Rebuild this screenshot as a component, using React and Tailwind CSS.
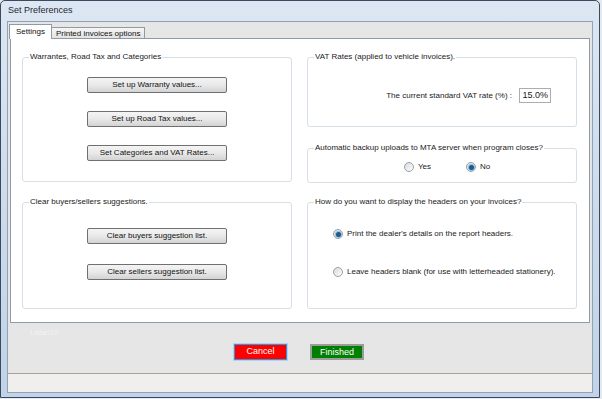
import { useState } from "react";

function GroupBox({ title, className, children }) {
  return (
    <div className={`relative rounded-[3px] border border-[#d5dfe5] ${className}`}>
      <span className="absolute -top-[6px] left-[6px] bg-white px-px text-[8px] leading-[10px] text-[#1a1a1a]">{title}</span>
      {children}
    </div>
  );
}

function WinButton({ children, className = "" }) {
  return (
    <button className={`h-[16px] rounded-[2px] border border-[#707070] bg-gradient-to-b from-[#f4f4f4] via-[#e9e9e9] to-[#d3d3d3] text-[8px] leading-[10px] text-[#111] ${className}`}>
      {children}
    </button>
  );
}

function Radio({ checked, label, onClick }) {
  return (
    <label onClick={onClick} className="flex items-center gap-[4px] text-[8px] leading-[10px] text-[#1a1a1a] cursor-default">
      <span className="flex h-[10px] w-[10px] items-center justify-center rounded-full border border-[#9aa0a8] bg-gradient-to-br from-[#d6d9de] to-[#ffffff]">
        {checked && <span className="h-[5px] w-[5px] rounded-full bg-[#1e5a8c] shadow-[0_0_0_1px_#8dbde2]" />}
      </span>
      {label}
    </label>
  );
}

export default function App() {
  const [backup, setBackup] = useState("no");
  const [header, setHeader] = useState("print");

  return (
    <div className="h-[399px] w-[602px] bg-[#e4e9ef] font-['Liberation_Sans',Arial,sans-serif]">
      <div className="flex h-[398px] w-[600px] flex-col rounded-t-[5px] border border-[#3a4a60] bg-gradient-to-b from-[#dde7f3] via-[#cddbeb] to-[#c2d3e7] px-[6px] pb-[4px]">
        {/* title bar */}
        <div className="flex h-[20px] items-center pl-[1px] text-[9px] text-[#1e2836]">Set Preferences</div>

        {/* client area */}
        <div className="flex flex-1 flex-col border border-[#8ea2b8] bg-[#e6e6e6]">
          {/* tabs */}
          <div className="ml-[1px] flex h-[16px] items-end pt-[2px]">
            <div className="relative z-10 -mb-px flex h-[15px] items-center border border-b-0 border-[#8e9aa8] bg-white px-[6px] text-[8px] text-[#111]">
              Settings
            </div>
            <div className="-mb-px flex h-[12px] items-center border border-b-0 border-l-0 border-[#8e9aa8] bg-gradient-to-b from-[#f6f6f6] to-[#e1e1e1] px-[4px] text-[8px] text-[#111]">
              Printed invoices options
            </div>
          </div>

          {/* tab panel */}
          <div className="ml-[2px] mr-[2px] h-[285px] border border-[#8e9aa8] bg-white px-[11px] pt-[18px]">
            <div className="flex gap-[15px]">
              <div className="flex w-[270px] flex-col">
                <GroupBox title="Warrantes, Road Tax and Categories" className="h-[125px]">
                  <div className="flex flex-col items-center gap-[18px] pt-[19px]">
                    <WinButton className="w-[140px]">Set up Warranty values...</WinButton>
                    <WinButton className="w-[140px]">Set up Road Tax values...</WinButton>
                    <WinButton className="w-[140px]">Set Categories and VAT Rates...</WinButton>
                  </div>
                </GroupBox>
                <GroupBox title="Clear buyers/sellers suggestions." className="mt-[20px] h-[107px]">
                  <div className="flex flex-col items-center gap-[20px] pt-[25px]">
                    <WinButton className="w-[140px]">Clear buyers suggestion list.</WinButton>
                    <WinButton className="w-[140px]">Clear sellers suggestion list.</WinButton>
                  </div>
                </GroupBox>
              </div>

              <div className="flex w-[270px] flex-col">
                <GroupBox title="VAT Rates (applied to vehicle invoices)." className="h-[70px]">
                  <div className="flex items-center justify-end gap-[7px] pr-[25px] pt-[30px] text-[8px] text-[#1a1a1a]">
                    <span>The current standard VAT rate (%) :</span>
                    <div className="flex h-[15px] w-[32px] items-center justify-end border border-[#abadb3] pr-[2px] text-[9px]">15.0%</div>
                  </div>
                </GroupBox>
                <GroupBox title="Automatic backup uploads to MTA server when program closes?" className="mt-[21px] h-[35px]">
                  <div className="flex items-center gap-[35px] pl-[96px] pt-[13px]">
                    <Radio label="Yes" checked={backup === "yes"} onClick={() => setBackup("yes")} />
                    <Radio label="No" checked={backup === "no"} onClick={() => setBackup("no")} />
                  </div>
                </GroupBox>
                <GroupBox title="How do you want to display the headers on your invoices?" className="mt-[19px] h-[107px]">
                  <div className="flex flex-col gap-[28px] pl-[25px] pt-[26px]">
                    <Radio label="Print the dealer's details on the report headers." checked={header === "print"} onClick={() => setHeader("print")} />
                    <Radio label="Leave headers blank (for use with letterheaded stationery)." checked={header === "blank"} onClick={() => setHeader("blank")} />
                  </div>
                </GroupBox>
              </div>
            </div>
          </div>

          {/* footer */}
          <div className="flex h-[50px] flex-col">
            <div className="pl-[22px] pt-[5px] text-[8px] leading-[10px] text-[#f2f2f2]">Label10</div>
            <div className="mt-[6px] flex justify-center gap-[23px] pr-[2px]">
              <button className="h-[16px] w-[53px] border border-[#3c8fd0] bg-[#ff0000] text-[9px] text-white shadow-[0_0_0_1px_#a9d6f5]">Cancel</button>
              <button className="h-[16px] w-[54px] border-2 border-[#9c9c9c] bg-[#008000] text-[9px] text-white">Finished</button>
            </div>
          </div>

          {/* status strip */}
          <div className="flex-1 border-t border-[#a3a3a3] bg-[#f1eeee]" />
        </div>
      </div>
    </div>
  );
}
